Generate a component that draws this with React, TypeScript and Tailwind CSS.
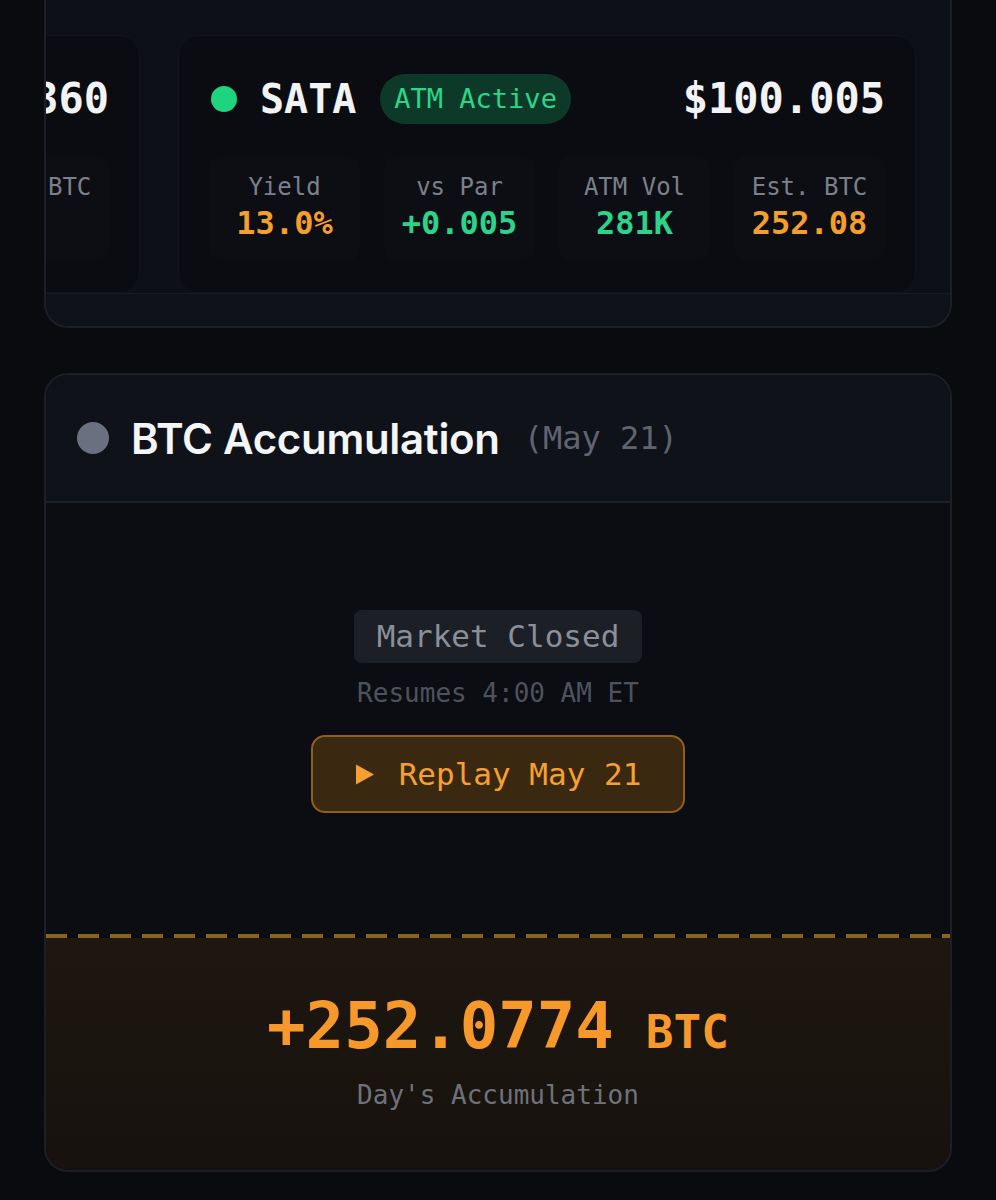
import React from 'react';

const mono = { fontFamily: '"DejaVu Sans Mono", "Liberation Mono", monospace' };

interface Stat {
  label: string;
  value: string;
  tone: 'orange' | 'green';
}

interface Ticker {
  name: string;
  price: string;
  badge?: string;
  stats: Stat[];
}

const tickers: Ticker[] = [
  {
    name: 'STRF',
    price: '$110.360',
    stats: [
      { label: 'Yield', value: '9.1%', tone: 'orange' },
      { label: 'vs Par', value: '+10.36', tone: 'green' },
      { label: 'ATM Vol', value: '0', tone: 'green' },
      { label: 'Est. BTC', value: '—', tone: 'orange' },
    ],
  },
  {
    name: 'SATA',
    price: '$100.005',
    badge: 'ATM Active',
    stats: [
      { label: 'Yield', value: '13.0%', tone: 'orange' },
      { label: 'vs Par', value: '+0.005', tone: 'green' },
      { label: 'ATM Vol', value: '281K', tone: 'green' },
      { label: 'Est. BTC', value: '252.08', tone: 'orange' },
    ],
  },
];

const TickerCard: React.FC<{ t: Ticker }> = ({ t }) => {
  return (
    <div className="w-[738px] shrink-0 rounded-[20px] border border-[#13151c] bg-[#0b0c11] px-[30px] pt-[30px] pb-[32px]">
      {/* Header */}
      <div className="flex h-[66px] items-center">
        <span className="ml-[2px] h-[26px] w-[26px] rounded-full bg-[#1fd47f]" />
        <span className="ml-[23px] text-[40px] font-bold leading-none text-[#f2f3f5]" style={mono}>
          {t.name}
        </span>
        {t.badge && (
          <span
            className="ml-[24px] flex h-[50px] items-center rounded-full bg-[#0d3a28] px-[14px] text-[27px] text-[#2bd68a]"
            style={mono}
          >
            {t.badge}
          </span>
        )}
        <span className="ml-auto text-[42px] font-bold leading-none text-[#f2f3f5]" style={mono}>
          {t.price}
        </span>
      </div>

      {/* Stats */}
      <div className="mt-[24px] grid grid-cols-4 gap-[24px]">
        {t.stats.map((s) => (
          <div key={s.label} className="rounded-[12px] bg-[#0d0e13] pt-[16px] pb-[18px] text-center" style={mono}>
            <div className="text-[24px] leading-[30px] text-[#7b808b]">{s.label}</div>
            <div
              className={
                'mt-[2px] text-[32px] font-bold leading-[38px] ' +
                (s.tone === 'orange' ? 'text-[#f49e2c]' : 'text-[#2bd48a]')
              }
            >
              {s.value}
            </div>
          </div>
        ))}
      </div>
    </div>
  );
};

export default function App() {
  return (
    <div className="min-h-[1200px] w-full overflow-hidden bg-[#0a0b0f] px-[44px]">
      {/* Ticker carousel card */}
      <div className="overflow-hidden rounded-b-[24px] border-x-2 border-b-2 border-[#1c1f28] bg-[#10121a]">
        <div className="bg-[#0e1017] pt-[35px]">
          <div className="ml-[-644px] flex gap-[38px]">
            {tickers.map((t) => (
              <TickerCard key={t.name} t={t} />
            ))}
          </div>
        </div>
        <div className="h-[33px] border-t border-[#171a22] bg-[#10121a]" />
      </div>

      {/* BTC Accumulation card */}
      <div className="mt-[45px] overflow-hidden rounded-[24px] border-2 border-[#1c1f28] bg-[#0c0d12]">
        <div className="flex h-[128px] items-center border-b-2 border-[#1d2029] bg-[#10121a] pl-[31px]">
          <span className="h-[32px] w-[32px] rounded-full bg-[#6b7080]" />
          <span
            className="ml-[22px] text-[42px] font-semibold tracking-[-0.3px] text-[#f4f5f7]"
            style={{ fontFamily: 'Inter, "Noto Sans", sans-serif' }}
          >
            BTC Accumulation
          </span>
          <span className="ml-[24px] text-[32px] text-[#5f6470]" style={mono}>
            (May 21)
          </span>
        </div>

        <div className="flex h-[431px] flex-col items-center pt-[107px]" style={mono}>
          <div className="flex h-[53px] items-center rounded-[8px] bg-[#1c1f26] px-[23px] text-[31px] text-[#8a8f99]">
            Market Closed
          </div>
          <div className="mt-[14px] text-[26px] leading-[32px] text-[#4d525d]">Resumes 4:00 AM ET</div>
          <button className="mt-[26px] flex h-[78px] items-center gap-[24px] rounded-[14px] border-2 border-[#8f5f1c] bg-[#3a2810] px-[42px] text-[31px] text-[#f7a030]">
            <svg width="20" height="21" viewBox="0 0 20 21" fill="#f7a030">
              <path d="M1 0.5 L19 10.5 L1 20.5 Z" />
            </svg>
            Replay May 21
          </button>
        </div>

        <div className="h-[4px] bg-[repeating-linear-gradient(90deg,#8a6224_0_21px,transparent_21px_32px)]" />

        <div
          className="flex flex-col items-center bg-[linear-gradient(180deg,#1e1710,#17120e)] pt-[50px] pb-[59px]"
          style={mono}
        >
          <div className="flex items-baseline text-[#f7992a]">
            <span className="text-[64px] font-bold leading-[77px]">+252.0774</span>
            <span className="ml-[32px] text-[46px] font-bold">BTC</span>
          </div>
          <div className="mt-[12px] text-[26px] leading-[32px] text-[#6e727b]">Day's Accumulation</div>
        </div>
      </div>
    </div>
  );
}
